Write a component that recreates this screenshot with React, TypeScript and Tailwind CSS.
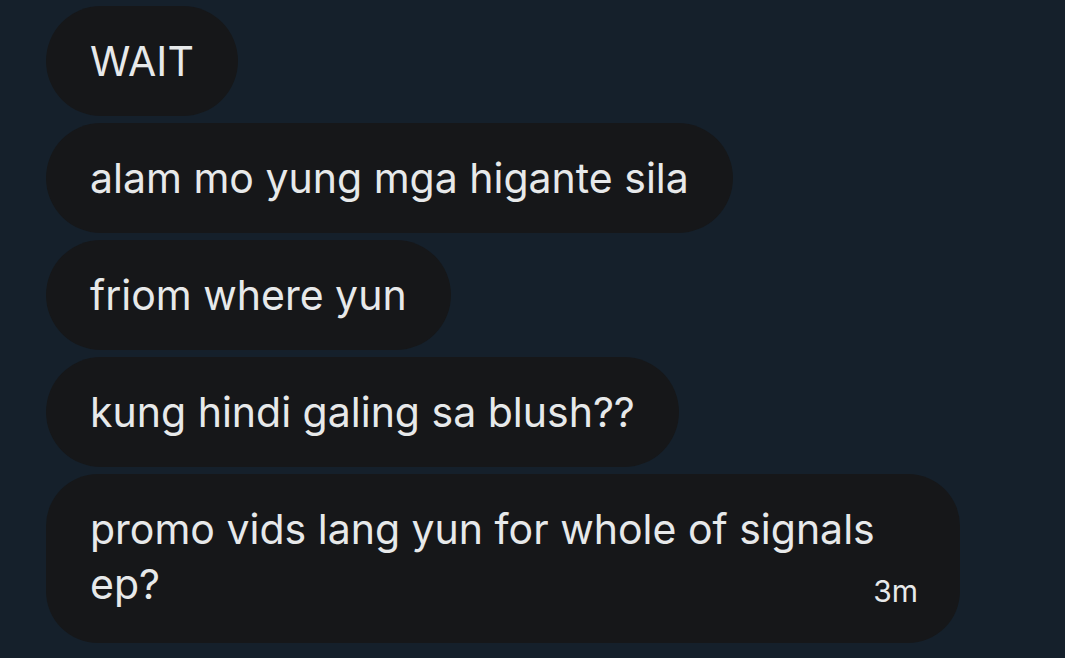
import React from 'react';

const messages = ["WAIT", "alam mo yung mga higante sila", "friom where yun", "kung hindi galing sa blush??"];

const App = () => {
  return (
    <div className="w-[1065px] h-[658px] overflow-hidden bg-[#15202b] pl-[46px] pt-[6px] font-['Inter','Liberation_Sans',sans-serif] text-[#e7e9ea]">
      <div className="flex flex-col items-start gap-[7px]">
        {messages.map(msg => (
          <div key={msg} className="bg-[#161719] rounded-[55px] px-[44px] py-[27.5px] text-[41px] leading-[55px]">
            {msg}
          </div>
        ))}

        <div className="w-[914px] bg-[#161719] rounded-[52px] pl-[44px] pr-[42px] pt-[28px] pb-[27px] text-[41px] leading-[55px]">
          <p>promo vids lang yun for whole of signals</p>
          <div className="flex justify-between items-baseline">
            <span>ep?</span>
            <span className="text-[30px] translate-y-[3px]">3m</span>
          </div>
        </div>
      </div>
    </div>
  );
};

export default App;
